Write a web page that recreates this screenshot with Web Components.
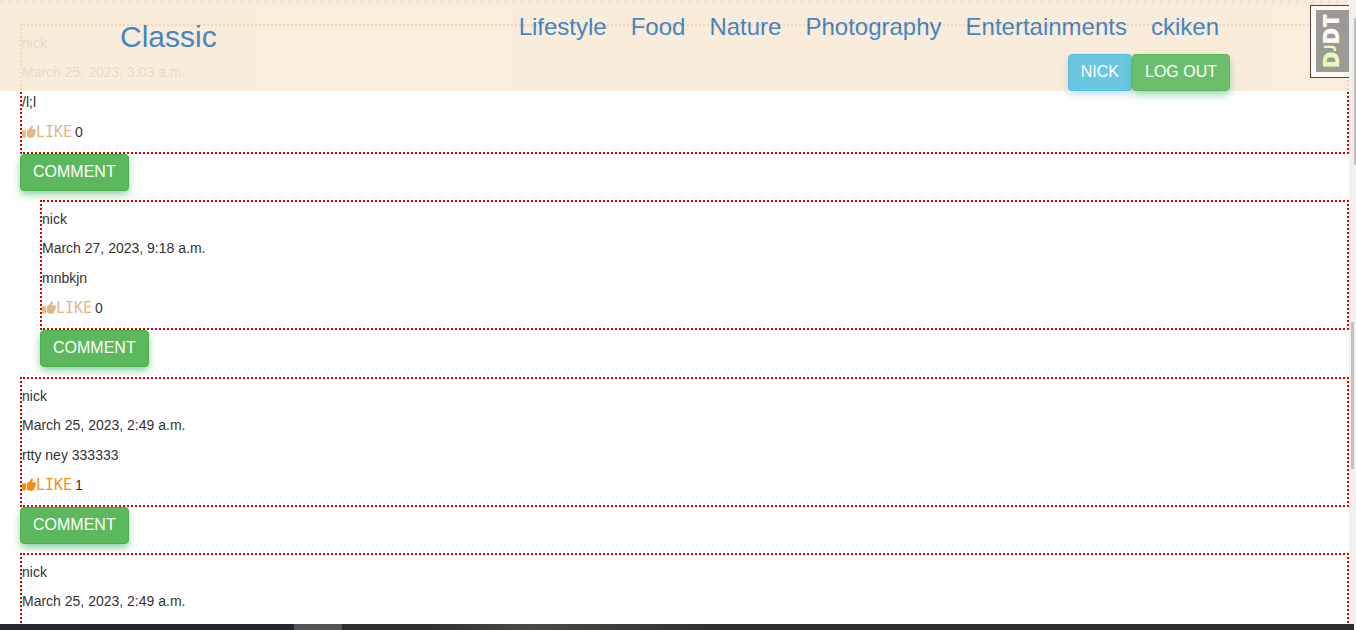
<!DOCTYPE html>
<html lang="en">
<head>
<meta charset="utf-8">
<title>Classic</title>
<style>
  html, body { height: 100%; margin: 0; overflow: hidden; }
  body { font: 14px/20px "Liberation Sans", Arial, sans-serif; color: #333; background: #fff; }
</style>
</head>
<body>
<blog-app>
  <site-header slot="header"></site-header>
  <debug-handle slot="header"></debug-handle>
  <comment-card author="nick" date="March 25, 2023, 3:03 a.m." likes="0">/l;l</comment-card>
  <comment-card reply author="nick" date="March 27, 2023, 9:18 a.m." likes="0">mnbkjn</comment-card>
  <comment-card liked author="nick" date="March 25, 2023, 2:49 a.m." likes="1">rtty ney 333333</comment-card>
  <comment-card author="nick" date="March 25, 2023, 2:49 a.m."></comment-card>
</blog-app>

<script>
  function define(name, render) {
    customElements.define(name, class extends HTMLElement {
      constructor() {
        super();
        this.attachShadow({ mode: 'open' });
      }
      connectedCallback() {
        this.shadowRoot.innerHTML = render(this);
      }
    });
  }

  define('blog-app', () => `
    <style>
      :host { display: flex; flex-direction: column; height: 100vh; }
      .window { flex: 1; min-height: 0; display: flex; }
      .page { flex: 1; min-width: 0; position: relative; overflow: hidden; }
      .overlay { position: absolute; inset: 0 0 auto 0; z-index: 2; }
      hr { margin: 0; border: 0; border-top: 4px dotted #999; }
      main { padding: 20px 0 0 20px; }
    </style>
    <div class="window">
      <div class="page">
        <div class="overlay"><slot name="header"></slot></div>
        <hr>
        <main><slot></slot></main>
      </div>
      <scroll-gutter></scroll-gutter>
    </div>
    <task-strip></task-strip>`);

  define('site-header', () => `
    <style>
      :host { display: block; background: #faebd7; opacity: 0.9; }
      header { display: flex; justify-content: space-between; padding: 12px 119px 0 120px; }
      a { color: #337ab7; text-decoration: none; }
      .brand { font-size: 30px; line-height: 50px; }
      .side { display: flex; flex-direction: column; align-items: flex-end; gap: 12px; }
      nav { display: flex; gap: 24px; margin-right: 11px; font-size: 24px; line-height: 30px; }
      .actions { display: flex; }
    </style>
    <header>
      <a class="brand" href="#">Classic</a>
      <div class="side">
        <nav>
          <a href="#">Lifestyle</a><a href="#">Food</a><a href="#">Nature</a><a href="#">Photography</a><a href="#">Entertainments</a><a href="#">ckiken</a>
        </nav>
        <div class="actions">
          <push-button kind="info">NICK</push-button><push-button>LOG OUT</push-button>
        </div>
      </div>
    </header>`);

  define('push-button', () => `
    <style>
      :host { display: block; --fill: #5cb85c; --edge: #4cae4c; --glow: #00963c80; }
      :host([kind="info"]) { --fill: #5bc0de; --edge: #46b8da; --glow: #0078b44d; }
      button {
        display: block; box-sizing: border-box; height: 37px; margin: 0; padding: 0 12px 2px;
        font: 16px/20px "Liberation Sans", Arial, sans-serif; color: #fff; white-space: nowrap;
        background: var(--fill); border: 1px solid var(--edge); border-radius: 4px;
        box-shadow: 0 4px 9px -1px var(--glow);
      }
    </style>
    <button type="button"><slot></slot></button>`);

  define('comment-card', el => `
    <style>
      :host { display: block; margin-bottom: 9px; }
      :host([reply]) { margin-left: 20px; margin-bottom: 10px; }
      article { min-height: 119px; padding-top: 7px; border: 2px dotted #d90000; }
      p { margin: 0 0 10px; min-height: 20px; }
      .author { margin-bottom: 9px; }
      push-button { width: max-content; }
    </style>
    <article>
      <p class="author">${el.getAttribute('author')}</p>
      <p>${el.getAttribute('date')}</p>
      <p><slot></slot></p>
      ${el.hasAttribute('likes') ? `<p><like-toggle ${el.hasAttribute('liked') ? 'on' : ''}></like-toggle> ${el.getAttribute('likes')}</p>` : ''}
    </article>
    ${el.hasAttribute('likes') ? '<push-button>COMMENT</push-button>' : ''}`);

  define('like-toggle', () => `
    <style>
      :host { display: inline-block; height: 20px; margin-right: -1px; vertical-align: top; color: #deb887; }
      :host([on]) { color: #f3910f; }
      button {
        display: flex; align-items: center; padding: 0; border: 0; background: none; color: inherit;
        font: 15px/20px "DejaVu Sans Mono", monospace;
      }
      svg { display: block; width: 14px; height: 14px; }
    </style>
    <button type="button">
      <svg viewBox="0 0 14 14" fill="currentColor" aria-hidden="true">
        <path d="M0 5.200h3.900v7.300H0z"/>
        <path d="M4.700 6.200C5.100 5.100 6.200 4.300 7.300 3.400L9.300.9C9.900.2 11.100.8 11 1.800 10.900 2.700 10.300 3.500 9.800 4.200H12.600C14.200 4.300 14.300 6 13.400 6.500 13.900 7.200 13.700 8.200 13 8.600 13.200 9.400 12.800 10.200 12.100 10.500 12.200 11.900 11.400 12.700 10 12.700H7.800C6.300 12.700 5.100 11.700 4.700 10.700Z"/>
      </svg>LIKE</button>`);

  define('debug-handle', () => `
    <style>
      :host { position: absolute; top: 5px; right: 0; opacity: 0.75; }
      a {
        display: flex; align-items: center; justify-content: center; box-sizing: border-box;
        width: 39px; height: 73px; border: 1px solid #111; border-right: 0;
        background: #7f7f7f; box-shadow: inset 5px 0 #fff, inset 0 4px #fff, inset 0 -5px #fff;
        color: #fff; text-decoration: none; font: 800 23px/24px "Open Sans", sans-serif;
      }
      .label { writing-mode: vertical-rl; transform: rotate(180deg); }
      .green { color: #dfffb3; }
      small { font: 900 16px/16px Lato, sans-serif; }
    </style>
    <a href="#" title="Show toolbar"><span class="label"><span class="green">D<small>J</small></span>DT</span></a>`);

  define('scroll-gutter', () => `
    <style>
      :host { display: grid; grid-template-columns: 2px 3px 2px; background: #f1f1f1; }
      .inner { grid-column: 2; margin-top: 322px; height: 147px; background: #c1c1c1; }
      .outer { grid-column: 3; grid-row: 1; margin-top: 18px; height: 147px; background: #c1c1c1; }
    </style>
    <div class="inner"></div><div class="outer"></div>`);

  define('task-strip', () => `
    <style>
      :host {
        display: flex; height: 6px; margin-right: 2px;
        background: linear-gradient(90deg, #26292b, #22262a 21%, #2e2f2f 26%, #2f3030 32%, #4a4a45 39%, #44423f 43%, #2b2c2e 54%, #2c2d2f);
      }
      .active { width: 48px; margin-left: 294px; background: #535455; }
    </style>
    <div class="active"></div>`);
</script>
</body>
</html>
